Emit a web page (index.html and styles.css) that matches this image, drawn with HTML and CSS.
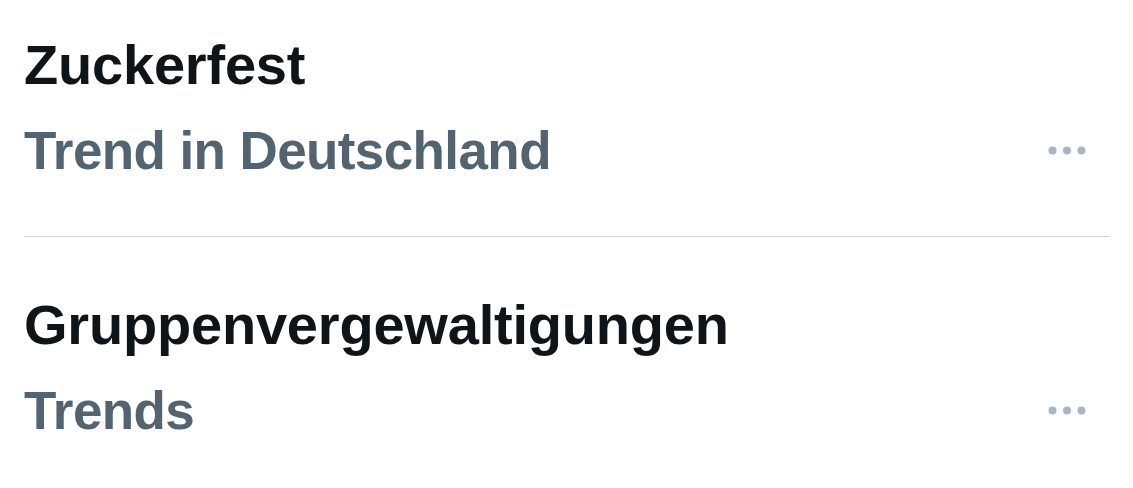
FILE: index.html
```html
<!DOCTYPE html>
<html lang="de">
<head>
<meta charset="utf-8">
<link rel="stylesheet" href="styles.css">
</head>
<body>
<div class="list">
  <div class="trend first">
    <div class="title">Zuckerfest</div>
    <div class="meta">
      <span class="sub">Trend in Deutschland</span>
      <svg class="more" width="38" height="9" viewBox="0 0 38 9"><circle cx="4.5" cy="4.5" r="4"/><circle cx="19" cy="4.5" r="4"/><circle cx="33.5" cy="4.5" r="4"/></svg>
    </div>
  </div>
  <div class="trend">
    <div class="title">Gruppenvergewaltigungen</div>
    <div class="meta">
      <span class="sub">Trends</span>
      <svg class="more" width="38" height="9" viewBox="0 0 38 9"><circle cx="4.5" cy="4.5" r="4"/><circle cx="19" cy="4.5" r="4"/><circle cx="33.5" cy="4.5" r="4"/></svg>
    </div>
  </div>
</div>
</body>
</html>
```
FILE: styles.css
```css
html, body {
  margin: 0;
  padding: 0;
  background: #ffffff;
}
body {
  font-family: "Liberation Sans", Arial, sans-serif;
  width: 1133px;
  height: 488px;
  overflow: hidden;
}
.list {
  display: flex;
  flex-direction: column;
  padding: 0 23px 0 24px;
}
.trend {
  padding: 45px 0 42px;
  border-bottom: 1px solid #d3d6d9;
}
.trend.first {
  padding-top: 22px;
}
.trend:last-child {
  border-bottom: none;
}
.title {
  font-size: 56px;
  line-height: 86px;
  font-weight: 700;
  color: #0f1419;
  letter-spacing: -0.2px;
}
.meta {
  display: flex;
  justify-content: space-between;
  align-items: flex-start;
}
.sub {
  font-size: 53px;
  line-height: 86px;
  font-weight: 700;
  color: #536471;
  letter-spacing: -0.6px;
}
.more {
  margin-top: 38px;
  margin-right: 24px;
  fill: #a9b6c1;
}
```
